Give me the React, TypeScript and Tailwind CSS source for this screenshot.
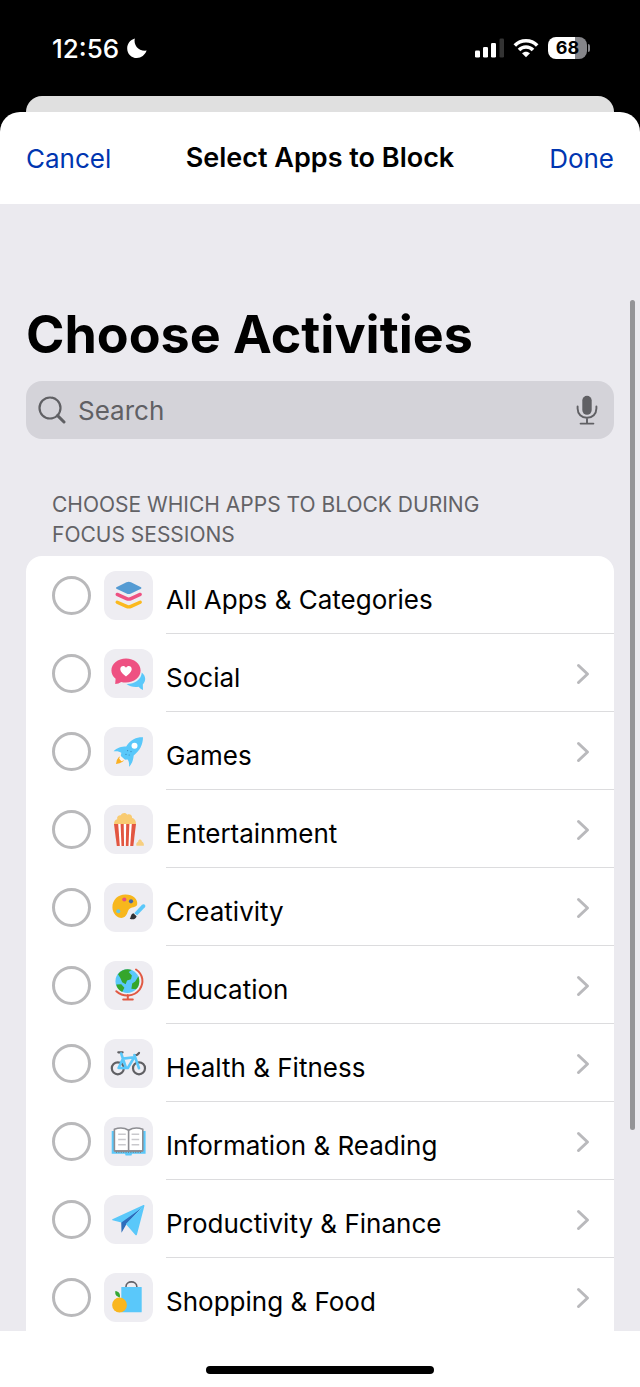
import type { ReactNode } from "react";

type Category = {
    id: string;
    name: string;
    icon: ReactNode;
    expandable: boolean;
};

// Artwork for each category, drawn on a 49 unit tile
const layersArt = (
    <>
        <path d="M12.4 16.2 22.5 11.3Q24.8 10.2 27 11.3L37 16.2Q38 17 37 17.8L27 22.6Q24.8 23.6 22.5 22.6L12.4 17.8Q11.4 17 12.4 16.2Z" fill="#559bd3" />
        <path d="M13.2 23.4 22.5 27.6Q24.8 28.6 27 27.6L36.2 23.4" fill="none" stroke="#ee5182" strokeWidth="3.4" strokeLinecap="round" />
        <path d="M13.2 31.2 22.5 35.4Q24.8 36.4 27 35.4L36.2 31.2" fill="none" stroke="#fbb91f" strokeWidth="3.4" strokeLinecap="round" />
    </>
);

const socialArt = (
    <>
        <path d="M37.8 23.5C42 27 42.3 32 38.8 35.4L39 41Q36.5 40 34.6 37.8C30 38.6 25.5 37.4 22.5 35C30 35.2 37.3 31 37.8 23.5Z" fill="#5ac8fa" />
        <path d="M22 9.6C30.2 9.6 36.6 14.9 36.6 21.6S30.2 33.6 22 33.6C20.3 33.6 18.7 33.4 17.2 33Q14.6 34.8 11.2 35L11.6 29.8C8.9 27.6 7.4 24.8 7.4 21.6C7.4 14.9 13.8 9.6 22 9.6Z" fill="#ee5182" />
        <path d="M22 27.4C17.8 24.2 16.3 22 16.3 19.9C16.3 16.6 20.5 15.9 22 18.7C23.5 15.9 27.7 16.6 27.7 19.9C27.7 22 26.2 24.2 22 27.4Z" fill="#fff" />
    </>
);

const rocketArt = (
    <>
        <path d="M39 10.3C33 10 27 12.3 22.2 19.4C17.4 19.5 13 20.5 9.6 24.3C13.2 23.9 15.6 24.4 17.3 25.8L16.8 29.4 20.4 32.8 23.6 32.6C25 34.4 25.4 37 24.9 39.9C27.8 37.2 29.3 33 29.7 28.4C36 23.8 39 17.2 39 10.3Z" fill="#5ac8fa" />
        <circle cx="30.5" cy="18.8" r="3" fill="#fff" />
        <g fill="#3885bb">
            <circle cx="23.6" cy="23.6" r=".6" />
            <circle cx="27" cy="24.6" r=".6" />
            <circle cx="22" cy="27.4" r=".6" />
            <circle cx="25.2" cy="28" r=".6" />
        </g>
        <path d="M15.2 29.6 20 33.6Q17.4 36.6 12 37Q12.6 32.2 15.2 29.6Z" fill="#fbb022" />
        <path d="M16.3 28.6 21 32.8 17.4 34.2 15.2 31.7Z" fill="#fff4ed" />
    </>
);

const popcornArt = (
    <>
        <path d="M10 19.4C10 16.3 11.2 14.4 13.2 14.2C12.6 11.4 14.8 10 16.8 10.3C18 7.3 22 7.2 23.2 9.7C26 8.6 28.4 10.4 28.1 12.9C31 13.4 32 16 32 19.4Z" fill="#f9cb71" />
        <path d="M10 19H32L29.3 41H12.8Z" fill="#e25641" />
        <path d="M14.2 19H16.6L17.5 41H15.8ZM19.7 19H22.2L21.8 41H20.1ZM25.4 19H27.8L26.2 41H24.5Z" fill="#fff" />
        <path d="M32.4 40.7C31.8 38.8 33 37.1 34.2 36.5C34.3 34 37.4 34 37.9 36.4C39.4 37.2 40.2 38.8 39.8 40.7Z" fill="#f7cf80" />
    </>
);

const paletteArt = (
    <>
        <path d="M21.4 11.4C29.2 11.4 34 16.3 33.2 21.2C32.5 25.1 26.7 23.5 24.8 26.6C23.4 29 23.3 31.8 20.8 33.8C16.2 37.3 8.4 32 8.4 24.2C8.4 16.7 14 11.4 21.4 11.4Z" fill="#f7b71d" />
        <circle cx="20.3" cy="16.5" r="2.1" fill="#e7517d" />
        <circle cx="27" cy="18.3" r="2.1" fill="#4566a7" />
        <circle cx="14.3" cy="28.3" r="2" fill="#62c6e7" />
        <path d="M30.2 30.2 38 21.8C39.8 20.1 42.4 22.5 40.9 24.3L33.2 32.3Z" fill="#5ac8fa" />
        <path d="M29.4 30.2 32.6 33.2C32 36 29.2 37.1 25.7 35.7C27.1 34.9 26.4 31 29.4 30.2Z" fill="#303236" />
    </>
);

const globeArt = (
    <>
        <circle cx="23.4" cy="20.2" r="11.9" fill="#5ac8fa" />
        <path d="M14 13.2C17.2 8.6 23.2 7.5 27.6 9L24.7 11.1 27.9 14.4 27 18.2 23 19.6 21.7 23.2 18.2 21.3 16.2 16.7ZM12.3 23.6 17.3 23.2 20.4 26.7 18.2 30.9C14.8 29.5 12.7 26.9 12.3 23.6ZM34.4 15.2C36 19.8 35.6 25.2 32 28.3L27.4 27.8 28.2 22.4 31.2 20.5Z" fill="#35a62b" />
        <path d="M32 8.5C39.5 13.5 40 22 35.7 28.5C30 35.8 19.5 36.6 12.3 30.2M23.8 34V38.3M19.2 38.6H28.8" fill="none" stroke="#e15943" strokeWidth="2" strokeLinecap="round" />
    </>
);

const bikeArt = (
    <>
        <g fill="none" stroke="#606064" strokeWidth="2.2">
            <circle cx="13.8" cy="29.3" r="6" />
            <circle cx="35" cy="29.3" r="6" />
            <path d="M14.3 13.3H18.6M30.8 16.1 33.3 15.8 35 13.9" strokeLinecap="round" />
        </g>
        <path d="M17.2 14.5 22 29H14.6L19 19.6 30.2 18.3 23.8 29H22M30.4 16 35 29.2" fill="none" stroke="#5ac8fa" strokeWidth="2.6" strokeLinejoin="round" strokeLinecap="round" />
    </>
);

const bookArt = (
    <>
        <path d="M7.7 14H41.6V36.8H28L27.5 38.4H21.6L21 36.8H7.7Z" fill="#5ac8fa" />
        <path d="M10.4 12.2C15 10.5 20.6 10.7 24.6 13.2C28.6 10.7 34.2 10.5 38.8 12.2V33.8H10.4Z" fill="#fff" stroke="#8e8e93" strokeWidth="1.6" strokeLinejoin="round" />
        <path d="M24.6 13.2V33.8M10.4 34.3H38.8" stroke="#8e8e93" strokeWidth="1.6" />
        <path d="M14.2 17.3H21.8M14.2 22.5H21.8M14.2 27.7H21.8M27.6 17.3H35.2M27.6 22.5H35.2M27.6 27.7H35.2" stroke="#c9c9cd" strokeWidth="1.4" />
        <path d="M12 35.3H38" stroke="#75777c" strokeWidth="1" strokeDasharray="1 1.4" />
    </>
);

const planeArt = (
    <>
        <path d="M17.2 26.6 39.2 11.2 22.4 29.2 17.5 37.8Z" fill="#2e6dbb" />
        <path d="M8.4 24.2 39.4 10Q40.7 9.7 40.4 11L32.9 39.8Q32.2 40.8 31.4 39.9L21.8 29.1 38 12.8 17.4 27.6 8.5 25.2Q7.7 24.7 8.4 24.2Z" fill="#5ac8fa" />
    </>
);

const shoppingArt = (
    <>
        <path d="M22 14.5V13.6C22 7.3 32.8 7.3 32.8 13.6V14.5" fill="none" stroke="#626268" strokeWidth="1.6" />
        <rect x="17.3" y="14" width="20.4" height="25.3" rx=".6" fill="#5ac8fa" />
        <circle cx="15.5" cy="32" r="7.4" fill="#f9b61f" />
        <path d="M15.8 24.4C11.8 23.5 10.7 21.2 11.4 18.1C14.8 18.7 16.6 20.9 15.8 24.4Z" fill="#35a735" />
    </>
);

const categories: Category[] = [
    { id: "all", name: "All Apps & Categories", icon: layersArt, expandable: false },
    { id: "social", name: "Social", icon: socialArt, expandable: true },
    { id: "games", name: "Games", icon: rocketArt, expandable: true },
    { id: "entertainment", name: "Entertainment", icon: popcornArt, expandable: true },
    { id: "creativity", name: "Creativity", icon: paletteArt, expandable: true },
    { id: "education", name: "Education", icon: globeArt, expandable: true },
    { id: "health", name: "Health & Fitness", icon: bikeArt, expandable: true },
    { id: "reading", name: "Information & Reading", icon: bookArt, expandable: true },
    { id: "finance", name: "Productivity & Finance", icon: planeArt, expandable: true },
    { id: "shopping", name: "Shopping & Food", icon: shoppingArt, expandable: true },
];

function StatusBar() {
    return (
        <div className="flex h-24 shrink-0 items-center justify-between pr-[50px] pl-[52px] text-white">
            <div className="flex items-center gap-2">
                <span className="text-[26px] font-medium">12:56</span>
                <svg viewBox="0 0 20 20" className="size-5" fill="currentColor">
                    <path d="M7.8.4C6.3 6.8 11.4 13.5 19.6 12.6C18 17.2 14.2 20 9.8 20C4.4 20 .2 15.8.2 10.4C.2 5.7 3 1.9 7.8.4Z" />
                </svg>
            </div>
            <div className="flex items-center gap-[9px]">
                <svg viewBox="0 0 30 20" className="h-5 w-[30px]" fill="currentColor">
                    <rect x="1" y="12.5" width="5" height="7" rx="1.3" />
                    <rect x="9" y="9" width="5" height="10.5" rx="1.3" />
                    <rect x="17" y="5" width="5" height="14.5" rx="1.3" />
                    <rect x="25.5" y=".5" width="4.5" height="19" rx="1.3" fill="#333" />
                </svg>
                <svg viewBox="0 0 26 20" className="h-5 w-[26px]" fill="none" stroke="currentColor" strokeWidth="3.6">
                    <path d="M1.8 7.5C8 1.2 18 1.2 24.2 7.5M6 12C9.9 8 16.1 8 20 12" />
                    <path d="M9 15.2C11.2 13.1 14.8 13.1 17 15.2L13 19.3Z" fill="currentColor" stroke="none" />
                </svg>
                <div className="flex items-center gap-px">
                    <span className="flex h-[22px] w-[39px] items-center justify-center rounded-lg bg-linear-to-r from-white from-68% to-[#858589] to-68% text-lg font-bold text-black">
                        68
                    </span>
                    <span className="h-2 w-0.5 rounded-r-full bg-[#858589]" />
                </div>
            </div>
        </div>
    );
}

function SearchField() {
    return (
        <div className="mt-[17px] flex h-[58px] items-center rounded-2xl bg-[#d4d3d9] px-3 text-[#606064]">
            <svg viewBox="0 0 28 28" className="size-7 shrink-0" fill="none" stroke="currentColor" strokeLinecap="round">
                <circle cx="12" cy="12" r="10.5" strokeWidth="2.2" />
                <path d="M19.6 19.6 26 26" strokeWidth="3" />
            </svg>
            <input
                type="text"
                aria-label="Search"
                placeholder="Search"
                className="ml-3 min-w-0 flex-1 bg-transparent text-[26px] outline-none placeholder:text-[#606064]"
            />
            <button type="button" aria-label="Dictate" className="px-1">
                <svg viewBox="0 0 22 30" className="h-[30px] w-[22px]" fill="none" stroke="currentColor" strokeWidth="1.9" strokeLinecap="round">
                    <rect x="6.3" y=".8" width="9.4" height="19" rx="4.7" fill="currentColor" stroke="none" />
                    <path d="M1.6 11.5V13.6C1.6 19 5.6 22.8 11 22.8S20.4 19 20.4 13.6V11.5M11 22.8V28.2M4.6 28.6H17.4" />
                </svg>
            </button>
        </div>
    );
}

function CategoryRow({ category }: { category: Category }) {
    return (
        <li className="group flex h-[78px] items-stretch pl-[26px]">
            <label className="flex min-w-0 flex-1 items-center">
                <input
                    type="checkbox"
                    name={category.id}
                    className="size-[39px] shrink-0 appearance-none rounded-full border-3 border-[#b9b9bb] checked:border-[#0035b0] checked:bg-[#0035b0]"
                />
                <svg viewBox="0 0 49 49" className="ml-[13px] size-[49px] shrink-0 rounded-xl bg-[#eeedf2]">
                    {category.icon}
                </svg>
                <span className="ml-[13px] flex h-full flex-1 items-center border-b border-[#dcdcde] pt-2.5 text-[26px] group-last:border-transparent">
                    {category.name}
                </span>
            </label>
            {category.expandable ? (
                <button type="button" aria-label={`Show ${category.name}`} className="border-b border-[#dcdcde] pt-0.5 pr-6 group-last:border-transparent">
                    <svg viewBox="0 0 14 22" className="h-[22px] w-3.5" fill="none" stroke="#b9b9bc" strokeWidth="3" strokeLinecap="round" strokeLinejoin="round">
                        <path d="M2.5 2.5 11.5 11 2.5 19.5" />
                    </svg>
                </button>
            ) : null}
        </li>
    );
}

export default function App() {
    return (
        <div className="flex h-screen flex-col overflow-hidden bg-black font-[Inter,'Liberation_Sans',sans-serif] text-black">
            <StatusBar />

            {/* Sheet underneath, only its top edge shows */}
            <div className="mx-[26px] h-4 shrink-0 rounded-t-2xl bg-[#e0e0e0]" />

            <div className="flex min-h-0 flex-1 flex-col overflow-hidden rounded-t-[20px] bg-white">
                <header className="grid h-[92px] shrink-0 grid-cols-[1fr_auto_1fr] items-center px-[26px] text-[26px]">
                    <button type="button" className="justify-self-start text-[#0035b0]">Cancel</button>
                    <h1 className="text-[27px] font-semibold">Select Apps to Block</h1>
                    <button type="button" className="justify-self-end text-[#0035b0]">Done</button>
                </header>

                <main className="relative min-h-0 flex-1 overflow-hidden bg-[#ebeaef] px-[26px] pt-[102px]">
                    <h2 className="text-[52px] leading-[58px] font-bold">Choose Activities</h2>
                    <SearchField />
                    <p className="mt-[51px] px-[26px] text-[21px] leading-[30px] text-[#626266] uppercase">
                        Choose which apps to block during
                        <br />
                        focus sessions
                    </p>
                    <ul className="mt-1.5 overflow-hidden rounded-t-2xl bg-white">
                        {categories.map(category => (
                            <CategoryRow key={category.id} category={category} />
                        ))}
                    </ul>

                    {/* Scroll indicator */}
                    <div className="absolute top-24 right-[5px] h-[830px] w-[5px] rounded-full bg-[#949497]" />
                </main>

                {/* Home indicator */}
                <div className="flex h-14 shrink-0 justify-center pt-[35px]">
                    <div className="h-2 w-[228px] rounded-full bg-black" />
                </div>
            </div>
        </div>
    );
}
